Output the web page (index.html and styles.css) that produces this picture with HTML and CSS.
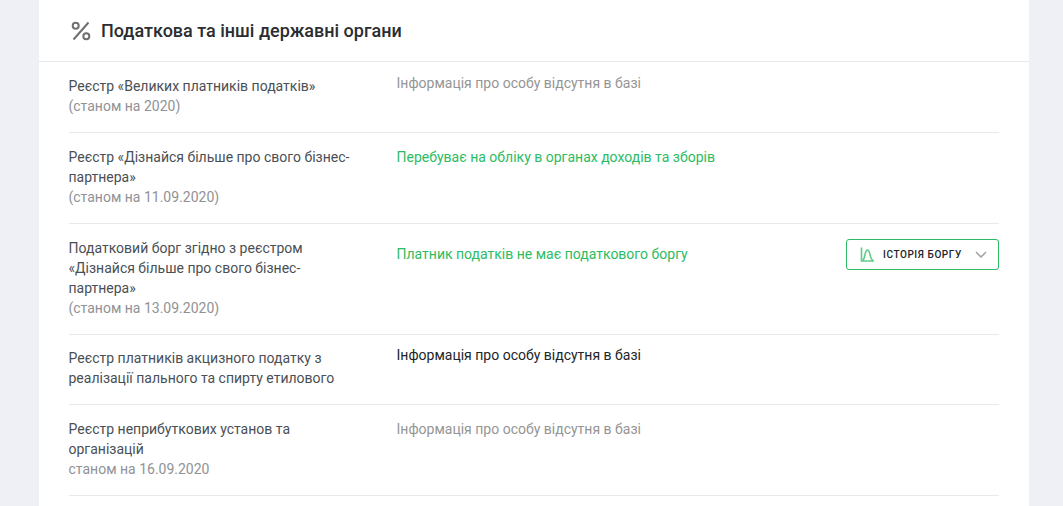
FILE: index.html
```html
<!DOCTYPE html>
<html lang="uk">
<head>
<meta charset="utf-8">
<title>Податкова та інші державні органи</title>
<link rel="stylesheet" href="styles.css">
</head>
<body>
<main class="card">
  <header class="card-head">
    <svg class="head-icon" width="20" height="20" viewBox="0 0 20 20" fill="none" stroke="#6f6f6f" stroke-width="2">
      <circle cx="4.7" cy="4.7" r="3"/>
      <circle cx="15.3" cy="15.3" r="3"/>
      <path d="M17.5 1.5 2.5 18.5"/>
    </svg>
    <h2 class="card-title">Податкова та інші державні органи</h2>
  </header>
  <div class="rows">
    <div class="row row-1">
      <div class="label">Реєстр «Великих платників податків»<br><span class="muted">(станом на 2020)</span></div>
      <div class="value muted-value shift-up">Інформація про особу відсутня в базі</div>
    </div>
    <div class="row row-2">
      <div class="label">Реєстр «Дізнайся більше про свого бізнес-партнера»<br><span class="muted">(станом на 11.09.2020)</span></div>
      <div class="value green">Перебуває на обліку в органах доходів та зборів</div>
    </div>
    <div class="row row-3">
      <div class="label">Податковий борг згідно з реєстром «Дізнайся більше про свого бізнес-партнера»<br><span class="muted">(станом на 13.09.2020)</span></div>
      <div class="value green shift-down">Платник податків не має податкового боргу</div>
      <button class="history-btn" type="button">
        <svg class="btn-icon" width="14" height="15" viewBox="0 0 14 15" fill="none" stroke="#5ccb85" stroke-width="1.6">
          <path d="M1.5 0.5V14H14"/>
          <path d="M2.5 13.5C5.5 12 4.5 3 7.5 3C10.5 3 9.5 12 13 13.5"/>
        </svg>
        <span class="btn-text">ІСТОРІЯ БОРГУ</span>
        <svg class="btn-chevron" width="12" height="7" viewBox="0 0 12 7" fill="none" stroke="#a6a6a6" stroke-width="1.6">
          <path d="M1 1l5 5 5-5"/>
        </svg>
      </button>
    </div>
    <div class="row row-4">
      <div class="label">Реєстр платників акцизного податку з реалізації пального та спирту етилового</div>
      <div class="value dark shift-up">Інформація про особу відсутня в базі</div>
    </div>
    <div class="row row-5">
      <div class="label">Реєстр неприбуткових установ та організацій<br><span class="muted">станом на 16.09.2020</span></div>
      <div class="value muted-value">Інформація про особу відсутня в базі</div>
    </div>
  </div>
</main>
</body>
</html>
```
FILE: styles.css
```css
* {
  box-sizing: border-box;
}

html,
body {
  height: 100%;
}

body {
  margin: 0;
  background: #eef0f6;
  font-family: Roboto, "Liberation Sans", sans-serif;
  font-size: 14px;
  line-height: 20px;
  overflow: hidden;
}

.card {
  width: 990px;
  min-height: 506px;
  margin-left: 39px;
  background: #fff;
}

.card-head {
  display: flex;
  align-items: center;
  height: 62px;
  padding-left: 32px;
  border-bottom: 1px solid #e9e9e9;
}

.head-icon {
  flex: none;
  margin-right: 10px;
}

.card-title {
  margin: 0;
  font-size: 18px;
  font-weight: 500;
  color: #2a2d31;
}

.rows {
  padding: 0 30px;
}

.row {
  display: flex;
  align-items: flex-start;
  padding: 14px 0 16px;
  border-bottom: 1px solid #e9e9e9;
}

.row-4 {
  padding-top: 13px;
}

.label {
  flex: none;
  width: 285px;
  margin-left: -0.5px;
  margin-right: 43px;
  color: #4a4f55;
}

.muted {
  color: #8f9296;
}

.value {
  flex: 1;
}

.shift-up {
  margin-top: -3px;
}

.shift-down {
  margin-top: 6px;
}

.muted-value {
  color: #959595;
}

.green {
  color: #2cbc63;
}

.dark {
  color: #212529;
}

.history-btn {
  display: flex;
  align-items: center;
  flex: none;
  width: 153px;
  height: 31px;
  margin-top: 1px;
  padding: 0 11px 0 13px;
  border: 1px solid #2cbc63;
  border-radius: 3px;
  background: #fff;
  font-family: inherit;
  font-size: 10px;
  font-weight: 500;
  letter-spacing: 0.58px;
  color: #212529;
}

.btn-icon {
  flex: none;
  margin-right: 9px;
}

.btn-text {
  flex: 1;
  text-align: left;
}

.btn-chevron {
  flex: none;
}
```
